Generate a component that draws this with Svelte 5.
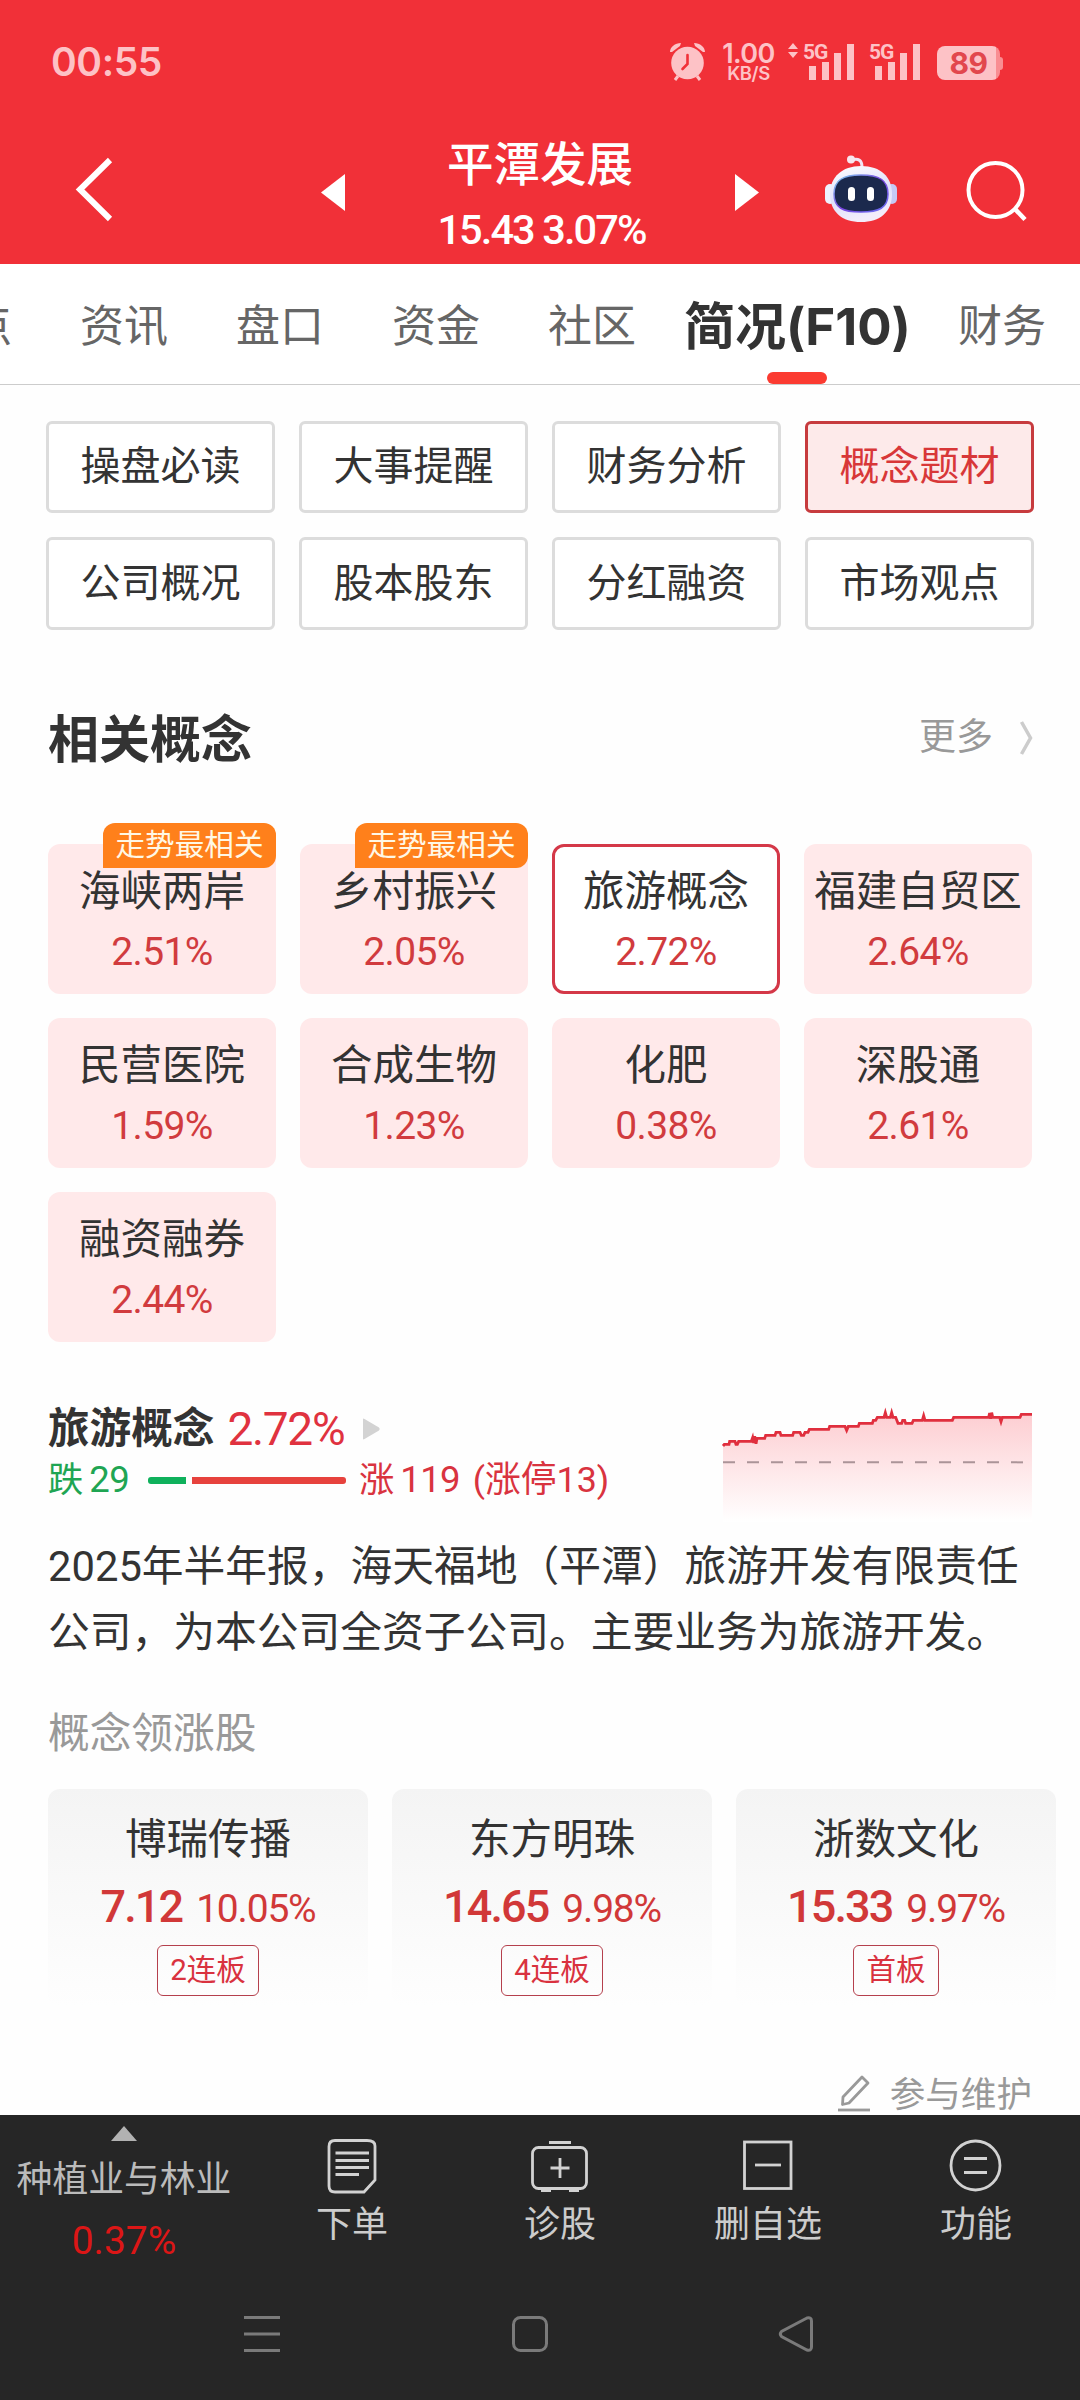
<script>
  const tabs = ["点", "资讯", "盘口", "资金", "社区", "简况(F10)", "财务"];
  const activeTab = "简况(F10)";

  const sections = [
    "操盘必读",
    "大事提醒",
    "财务分析",
    "概念题材",
    "公司概况",
    "股本股东",
    "分红融资",
    "市场观点",
  ];
  let section = "概念题材";

  const concepts = [
    { name: "海峡两岸", change: "2.51%", top: true },
    { name: "乡村振兴", change: "2.05%", top: true },
    { name: "旅游概念", change: "2.72%" },
    { name: "福建自贸区", change: "2.64%" },
    { name: "民营医院", change: "1.59%" },
    { name: "合成生物", change: "1.23%" },
    { name: "化肥", change: "0.38%" },
    { name: "深股通", change: "2.61%" },
    { name: "融资融券", change: "2.44%" },
  ];
  let concept = "旅游概念";

  const leaders = [
    { name: "博瑞传播", price: "7.12", change: "10.05%", tag: "2连板" },
    { name: "东方明珠", price: "14.65", change: "9.98%", tag: "4连板" },
    { name: "浙数文化", price: "15.33", change: "9.97%", tag: "首板" },
  ];

  const trend =
    "M129 197L133 192H147L149 183H165L168 192H172L176 183H214L218 172L221 188L224 168L228 190L231 174H254L257 165H285L288 156H300L303 165H338L341 156H360L364 165H371L375 156H384L388 147H446L449 138H495L500 150L505 138H535L538 129H577L580 120H587L592 111H612L616 97L620 111H631L635 97L639 111H647L654 129H665L668 120H674L677 129H696L700 120H727L731 106L735 120H817L821 111H926L929 98L932 115L935 97L938 111H959L963 124L967 111H1020L1024 102H1056";
</script>

<div class="page">
  <header>
    <div class="status">
      <span class="clock">00:55</span>
      <div class="status_icons">
        <svg class="alarm" width="37" height="39" viewBox="0 0 37 39">
          <path
            d="M1 10C1 5 6 1 12 1L11 4L3 10ZM36 10C36 5 31 1 25 1L26 4L34 10Z"
            fill="#fdc2c6"
          />
          <circle cx="18.5" cy="21" r="16.3" fill="#fdc2c6" />
          <path d="M9 34L6 38M28 34L31 38" stroke="#fdc2c6" stroke-width="3" />
          <path
            d="M18.5 13V22L13.5 27"
            fill="none"
            stroke="#f13038"
            stroke-width="2.6"
            stroke-linecap="round"
          />
        </svg>
        <div class="speed"><b>1.00</b><span>KB/S</span></div>
        <div class="signal">
          <svg width="66" height="37" viewBox="0 0 66 37" fill="#fdc2c6">
            <path d="M0 6L5 0L10 6ZM0 9L5 15L10 9Z" />
            <path d="M21 23h7v14h-7zM34 19h7v18h-7zM46 10h7v27h-7zM59 1h7v36h-7z" />
          </svg>
          <span>5G</span>
        </div>
        <div class="signal second">
          <svg width="51" height="37" viewBox="0 0 51 37" fill="#fdc2c6">
            <path d="M6 23h7v14h-7zM19 19h7v18h-7zM31 10h7v27h-7zM44 1h7v36h-7z" />
          </svg>
          <span>5G</span>
        </div>
        <div class="battery">
          <span>89</span>
        </div>
      </div>
    </div>

    <div class="nav">
      <svg class="back" width="40" height="68" viewBox="0 0 40 68">
        <path d="M35 5L5 34.5L35 64" fill="none" stroke="#fff" stroke-width="6" />
      </svg>
      <svg class="prev" width="24" height="37" viewBox="0 0 24 37">
        <path d="M24 0V37L0 18.5Z" fill="#fff" />
      </svg>
      <div class="stock">
        <p class="stock_name">平潭发展</p>
        <p class="stock_price">15.43 3.07%</p>
      </div>
      <svg class="next" width="24" height="37" viewBox="0 0 24 37">
        <path d="M0 0V37L24 18.5Z" fill="#fff" />
      </svg>
      <svg class="robot" width="72" height="68" viewBox="0 0 72 68">
        <defs>
          <linearGradient id="shell" x1="0" y1="0" x2="0.3" y2="1">
            <stop offset="0" stop-color="#fff" />
            <stop offset="0.6" stop-color="#dfe0fa" />
            <stop offset="1" stop-color="#f3ecfb" />
          </linearGradient>
          <linearGradient id="rim" x1="0" y1="0" x2="1" y2="1">
            <stop offset="0" stop-color="#7fd4ee" />
            <stop offset="0.5" stop-color="#7a45e0" />
            <stop offset="1" stop-color="#6a72f2" />
          </linearGradient>
        </defs>
        <path d="M27 5C33 3 37 5 37 12" fill="none" stroke="#f2e4f4" stroke-width="3" />
        <circle cx="26" cy="4.5" r="4" fill="#f8e6ee" />
        <rect x="0" y="29" width="10" height="20" rx="5" fill="#edf2ff" />
        <rect x="62" y="29" width="10" height="20" rx="5" fill="#c5c9f5" />
        <path
          d="M36 11C56 11 67 22 67 39C67 57 55 67 36 67C17 67 5 57 5 39C5 22 17 11 36 11Z"
          fill="url(#shell)"
        />
        <path
          d="M36 20C54 20 63 25 63 39C63 53 54 57 36 57C18 57 9 53 9 39C9 25 18 20 36 20Z"
          fill="#1b294d"
          stroke="url(#rim)"
          stroke-width="1.5"
        />
        <rect x="23" y="32" width="7" height="14" rx="3.5" fill="#fff" />
        <rect x="42" y="32" width="7" height="14" rx="3.5" fill="#fff" />
      </svg>
      <svg class="search" width="60" height="60" viewBox="0 0 60 60">
        <circle cx="28.5" cy="29" r="27" fill="none" stroke="#fff" stroke-width="4" />
        <path d="M47 47L58 58.5" stroke="#fff" stroke-width="4.5" />
      </svg>
    </div>
  </header>

  <nav class="tabs">
    {#each tabs as tab}
      <span class="tab" class:active={tab === activeTab}>{tab}</span>
    {/each}
  </nav>

  <main>
    <div class="sections">
      {#each sections as name}
        <button class:active={name === section} on:click={() => (section = name)}>
          {name}
        </button>
      {/each}
    </div>

    <div class="heading">
      <h2>相关概念</h2>
      <div class="more">
        <span>更多</span>
        <svg width="14" height="36" viewBox="0 0 14 36">
          <path d="M2.5 2L11.5 18L2.5 34" fill="none" stroke="#ccc" stroke-width="3.5" />
        </svg>
      </div>
    </div>

    <div class="concepts">
      {#each concepts as c}
        <div class="concept" class:selected={c.name === concept}>
          {#if c.top}<span class="badge">走势最相关</span>{/if}
          <p class="concept_name">{c.name}</p>
          <p class="concept_change">{c.change}</p>
        </div>
      {/each}
    </div>

    <div class="summary">
      <div>
        <div class="summary_title">
          <h3>旅游概念</h3>
          <span class="summary_change">2.72%</span>
          <svg width="17" height="22" viewBox="0 0 17 22">
            <path d="M0 1.5Q0 0 1.5 1L16 9.5Q17.5 11 16 12.5L1.5 21Q0 22 0 20.5Z" fill="#d3d3d3" />
          </svg>
        </div>
        <div class="breadth">
          <span class="down">跌<i>29</i></span>
          <span class="bar green"></span>
          <span class="bar red"></span>
          <span class="up">涨<i>119</i></span>
          <span class="limit">(涨停13)</span>
        </div>
      </div>
      <svg class="chart" width="309" height="115" viewBox="129 80 927 345">
        <defs>
          <linearGradient id="area" x1="0" y1="0" x2="0" y2="1">
            <stop offset="0" stop-color="#fdcdd1" />
            <stop offset="1" stop-color="#fff" />
          </linearGradient>
        </defs>
        <path d="{trend}V425H129Z" fill="url(#area)" />
        <path d="M129 246H1056" stroke="#ab9498" stroke-width="6" stroke-dasharray="36 36" />
        <path d={trend} fill="none" stroke="#e02f3e" stroke-width="8.5" />
      </svg>
    </div>

    <p class="intro">
      2025年半年报，海天福地（平潭）旅游开发有限责任<br />公司，为本公司全资子公司。主要业务为旅游开发。
    </p>

    <p class="sub">概念领涨股</p>
    <div class="leaders">
      {#each leaders as l}
        <div class="leader">
          <p class="leader_name">{l.name}</p>
          <p class="leader_price"><b>{l.price}</b><span>{l.change}</span></p>
          <span class="tag">{l.tag}</span>
        </div>
      {/each}
    </div>

    <div class="edit">
      <svg width="32" height="37" viewBox="0 0 32 37" fill="none" stroke="#999" stroke-width="2.8">
        <path d="M24 2L30 8L11 28L4.500 29.5L5 22Z" stroke-linejoin="round" />
        <path d="M0 35H32" />
      </svg>
      <span>参与维护</span>
    </div>
  </main>

  <footer>
    <div class="actions">
      <div class="industry">
        <svg width="26" height="15" viewBox="0 0 26 15"><path d="M13 0L26 15H0Z" fill="#b2b2b2" /></svg>
        <p>种植业与林业</p>
        <p class="industry_change">0.37%</p>
      </div>
      <div class="action">
        <svg width="58" height="58" viewBox="0 0 58 58">
          <path d="M12 4.500H44Q52 4.500 52 10V44L41 56H12Q6 56 6 50V10.500Q6 4.500 12 4.500Z" />
          <path d="M12.500 17H46M12.500 24.500H46M12.500 31.500H46M12.500 38.500H36" />
        </svg>
        <span>下单</span>
      </div>
      <div class="action">
        <svg width="58" height="58" viewBox="0 0 58 58">
          <rect x="1.5" y="11.5" width="54" height="41" rx="6" />
          <path d="M18 6.500H40M29 22V42M19.500 32H38.500M10 54.500H20M38 54.500H48" />
        </svg>
        <span>诊股</span>
      </div>
      <div class="action">
        <svg width="58" height="58" viewBox="0 0 58 58">
          <rect x="5.5" y="6" width="46.5" height="46.5" />
          <path d="M16 29H42" />
        </svg>
        <span>删自选</span>
      </div>
      <div class="action">
        <svg width="58" height="58" viewBox="0 0 58 58">
          <circle cx="28.5" cy="29.5" r="24.500" />
          <path d="M17 22.500H40M17 36.500H40" />
        </svg>
        <span>功能</span>
      </div>
    </div>
    <div class="system">
      <svg width="36" height="36" viewBox="0 0 36 36">
        <path d="M0 1.500H36M0 18H36M0 34.500H36" />
      </svg>
      <svg width="36" height="36" viewBox="0 0 36 36">
        <rect x="1.5" y="1.5" width="33" height="33" rx="7" />
      </svg>
      <svg width="36" height="36" viewBox="0 0 36 36">
        <path d="M27 2L1.500 15.500Q-1 18 1.500 20.500L27 34Q31.500 35 31.500 31V5Q31.500 1 27 2Z" />
      </svg>
    </div>
  </footer>
</div>

<style>
  :global(body) {
    margin: 0;
    background: #fff;
  }
  .page {
    width: 1080px;
    height: 2400px;
    overflow: hidden;
    display: flex;
    flex-direction: column;
    color: #333;
    background: #fefefe;
    font-family: Roboto, "Noto Sans CJK SC", sans-serif;
  }
  p,
  h2,
  h3 {
    margin: 0;
  }
  svg {
    display: block;
    flex: none;
    overflow: visible;
  }
  header {
    height: 264px;
    flex: none;
    background: #f13038;
    color: #fff;
  }
  .status {
    height: 124px;
    box-sizing: border-box;
    padding: 42px 77px 0 51px;
    display: flex;
    justify-content: space-between;
    color: #fdc2c6;
  }
  .clock {
    font: 600 39px/40px Inter, sans-serif;
    letter-spacing: -0.4px;
  }
  .status_icons {
    display: flex;
    align-items: flex-start;
  }
  .alarm {
    margin-right: 14px;
  }
  .speed {
    width: 57px;
    margin-right: 11px;
    display: flex;
    flex-direction: column;
    align-items: center;
    font-family: Inter, sans-serif;
  }
  .speed b {
    font-size: 27px;
    line-height: 24px;
    font-weight: 600;
    letter-spacing: -0.6px;
  }
  .speed span {
    font-size: 18.5px;
    line-height: 15px;
    font-weight: 600;
    letter-spacing: -0.4px;
  }
  .signal {
    position: relative;
    margin: 1px 15px 0 0;
  }
  .signal span {
    position: absolute;
    left: 15px;
    top: -2px;
    font-size: 21px;
    line-height: 22px;
    font-weight: 700;
    letter-spacing: -1px;
  }
  .signal.second {
    margin-right: 17px;
  }
  .signal.second span {
    left: 0;
  }
  .battery {
    position: relative;
    width: 63px;
    height: 34px;
    margin: 4px 3px 0 0;
    border-radius: 8px;
    background: linear-gradient(90deg, #fdc2c6 59px, #f98d92 59px);
    font: 700 30px/35px Inter, sans-serif;
    letter-spacing: -0.5px;
    color: #e2474d;
    text-align: center;
  }
  .battery::after {
    content: "";
    position: absolute;
    right: -3px;
    top: 11px;
    width: 3px;
    height: 13px;
    border-radius: 0 3px 3px 0;
    background: #f98d92;
  }
  .nav {
    display: flex;
    align-items: flex-start;
  }
  .back {
    margin: 31px 0 0 75px;
  }
  .prev {
    margin: 50px 0 0 206px;
  }
  .next {
    margin: 50px 0 0;
  }
  .stock {
    width: 390px;
    padding-top: 13px;
    text-align: center;
  }
  .stock_name {
    font-size: 46.5px;
    line-height: 56px;
    font-weight: 500;
  }
  .stock_price {
    margin-top: 9px;
    padding-left: 3px;
    font-size: 41.5px;
    line-height: 56px;
    font-weight: 500;
    letter-spacing: -1.9px;
  }
  .robot {
    margin: 31px 0 0 66px;
  }
  .search {
    margin: 37px 0 0 70px;
  }
  .tabs {
    height: 121px;
    box-sizing: border-box;
    flex: none;
    display: flex;
    gap: 68px;
    margin-left: -32px;
    border-bottom: 1px solid #ccc;
    background: #fff;
  }
  .tab {
    flex: none;
    height: 120px;
    font-size: 44px;
    line-height: 126px;
    color: #666;
    white-space: nowrap;
    position: relative;
  }
  .tab.active {
    width: 226px;
    margin: 0 -20px;
    text-align: center;
    color: #333;
    font-family: Inter, "Noto Sans CJK SC", sans-serif;
    font-size: 51px;
    line-height: 125px;
    font-weight: 700;
  }
  .tab.active::after {
    content: "";
    position: absolute;
    left: 83px;
    bottom: 0;
    width: 60px;
    height: 12px;
    border-radius: 6px;
    background: #fb3b31;
  }
  main {
    flex: none;
    height: 1730px;
    padding: 0 48px;
  }
  .sections {
    height: 209px;
    margin: 36px -2px 0;
    display: grid;
    grid-template-columns: repeat(4, 1fr);
    grid-template-rows: 92px 93px;
    gap: 24px;
  }
  .sections button {
    padding: 0;
    border: 3px solid #dcdcdc;
    border-radius: 6px;
    background: #fff;
    color: #333;
    font: 40px/84px Roboto, "Noto Sans CJK SC", sans-serif;
  }
  .sections button.active {
    border-color: #c73b3e;
    background: #fdeaea;
    color: #d83738;
  }
  .heading {
    margin-top: 79px;
    height: 60px;
    display: flex;
    justify-content: space-between;
    align-items: center;
  }
  h2 {
    font-size: 51px;
    line-height: 60px;
    padding-top: 3px;
    font-weight: 700;
  }
  .more {
    display: flex;
    align-items: center;
    gap: 26px;
    margin: -3px -1px 0 0;
    font-size: 37px;
    line-height: 44px;
    color: #999;
  }
  .concepts {
    margin-top: 75px;
    display: grid;
    grid-template-columns: repeat(4, 228px);
    grid-auto-rows: 150px;
    gap: 24px;
  }
  .concept {
    position: relative;
    box-sizing: border-box;
    padding-top: 20px;
    border-radius: 12px;
    background: #ffe9ea;
    text-align: center;
    white-space: nowrap;
  }
  .concept.selected {
    padding-top: 17px;
    border: 3px solid #d43848;
    background: #fff;
  }
  .concept_name {
    font-size: 41.5px;
    line-height: 56px;
  }
  .concept_change {
    font-size: 39px;
    line-height: 50px;
    margin-top: 7px;
    letter-spacing: -0.6px;
    color: #d13b3e;
  }
  .badge {
    position: absolute;
    right: 0;
    top: -21px;
    width: 173px;
    height: 45px;
    border-radius: 12px 12px 12px 0;
    background: #ff801b;
    color: #fff8e6;
    font-size: 29.6px;
    line-height: 45px;
  }
  .concept.selected .badge {
    right: -3px;
    top: -24px;
  }
  .summary {
    margin-top: 61px;
    height: 120px;
    display: flex;
    justify-content: space-between;
  }
  .summary_title {
    display: flex;
    align-items: center;
    height: 52px;
  }
  h3 {
    font-size: 41.6px;
    line-height: 50px;
    font-weight: 700;
  }
  .summary_change {
    margin: 0 19px 0 13px;
    font-size: 46px;
    line-height: 52px;
    letter-spacing: -1.3px;
    color: #e0323f;
  }
  .breadth {
    margin-top: 5px;
    height: 40px;
    display: flex;
    align-items: center;
    font-size: 35.3px;
    line-height: 40px;
    color: #d9333f;
  }
  .breadth i {
    font-style: normal;
    font-size: 36.5px;
    margin-left: 6px;
    letter-spacing: -0.7px;
  }
  .down {
    width: 100px;
    color: #1fa553;
  }
  .bar {
    height: 7px;
  }
  .bar.green {
    width: 38px;
    margin-right: 6px;
    background: #0fb15c;
    border-radius: 3px 0 0 3px;
  }
  .bar.red {
    width: 154px;
    margin-right: 13px;
    background: #e7423d;
    border-radius: 0 3px 3px 0;
  }
  .limit {
    margin-left: 13px;
    font-size: 35.8px;
  }
  .chart {
    margin-top: 4px;
  }
  .intro {
    margin: 11px -10px 0 0;
    font-size: 41.75px;
    line-height: 66px;
    white-space: nowrap;
  }
  .sub {
    margin-top: 43px;
    font-size: 41.7px;
    line-height: 50px;
    color: #999;
  }
  .leaders {
    margin-top: 30px;
    display: flex;
    gap: 24px;
  }
  .leader {
    flex: none;
    width: 320px;
    height: 218px;
    box-sizing: border-box;
    padding-top: 25px;
    border-radius: 12px;
    background: linear-gradient(#f4f4f4, #fefefe);
    text-align: center;
  }
  .leader_name {
    font-size: 41.5px;
    line-height: 52px;
  }
  .leader_price {
    height: 54px;
    margin-top: 14px;
    line-height: 54px;
    color: #d13838;
  }
  .leader_price b {
    margin-right: 14px;
    font-size: 45px;
    font-weight: 500;
    letter-spacing: -1.9px;
  }
  .leader_price span {
    font-size: 39px;
    letter-spacing: -1.2px;
  }
  .tag {
    display: block;
    width: fit-content;
    box-sizing: border-box;
    height: 51px;
    margin: 11px auto 0;
    padding: 0 12.5px;
    border: 1px solid #b5404d;
    border-radius: 6px;
    font-size: 29.5px;
    line-height: 48px;
    color: #d9323f;
  }
  .edit {
    margin-top: 64px;
    height: 44px;
    display: flex;
    justify-content: flex-end;
    align-items: center;
    gap: 20px;
    font-size: 35.6px;
    line-height: 44px;
    color: #999;
  }
  .edit span {
    padding-top: 3px;
  }
  footer {
    flex: 1;
    background: #262626;
    color: #ccc;
  }
  .actions {
    height: 201px;
    display: flex;
  }
  .industry {
    width: 248px;
    padding-top: 11px;
    display: flex;
    flex-direction: column;
    align-items: center;
    font-size: 35.8px;
    line-height: 50px;
    color: #bbb;
  }
  .industry svg {
    margin-bottom: 14px;
  }
  .industry p {
    white-space: nowrap;
  }
  .industry .industry_change {
    margin-top: 11px;
    font-size: 39px;
    color: #dc1616;
  }
  .action {
    width: 208px;
    padding-top: 21px;
    display: flex;
    flex-direction: column;
    align-items: center;
    font-size: 36px;
    line-height: 48px;
  }
  .action svg {
    margin-bottom: 7px;
    fill: none;
    stroke: #d2d2d2;
    stroke-width: 2.8px;
  }
  .system {
    display: flex;
    gap: 232px;
    padding-left: 244px;
  }
  .system svg {
    fill: none;
    stroke: #7a7a7a;
    stroke-width: 3px;
  }
</style>
